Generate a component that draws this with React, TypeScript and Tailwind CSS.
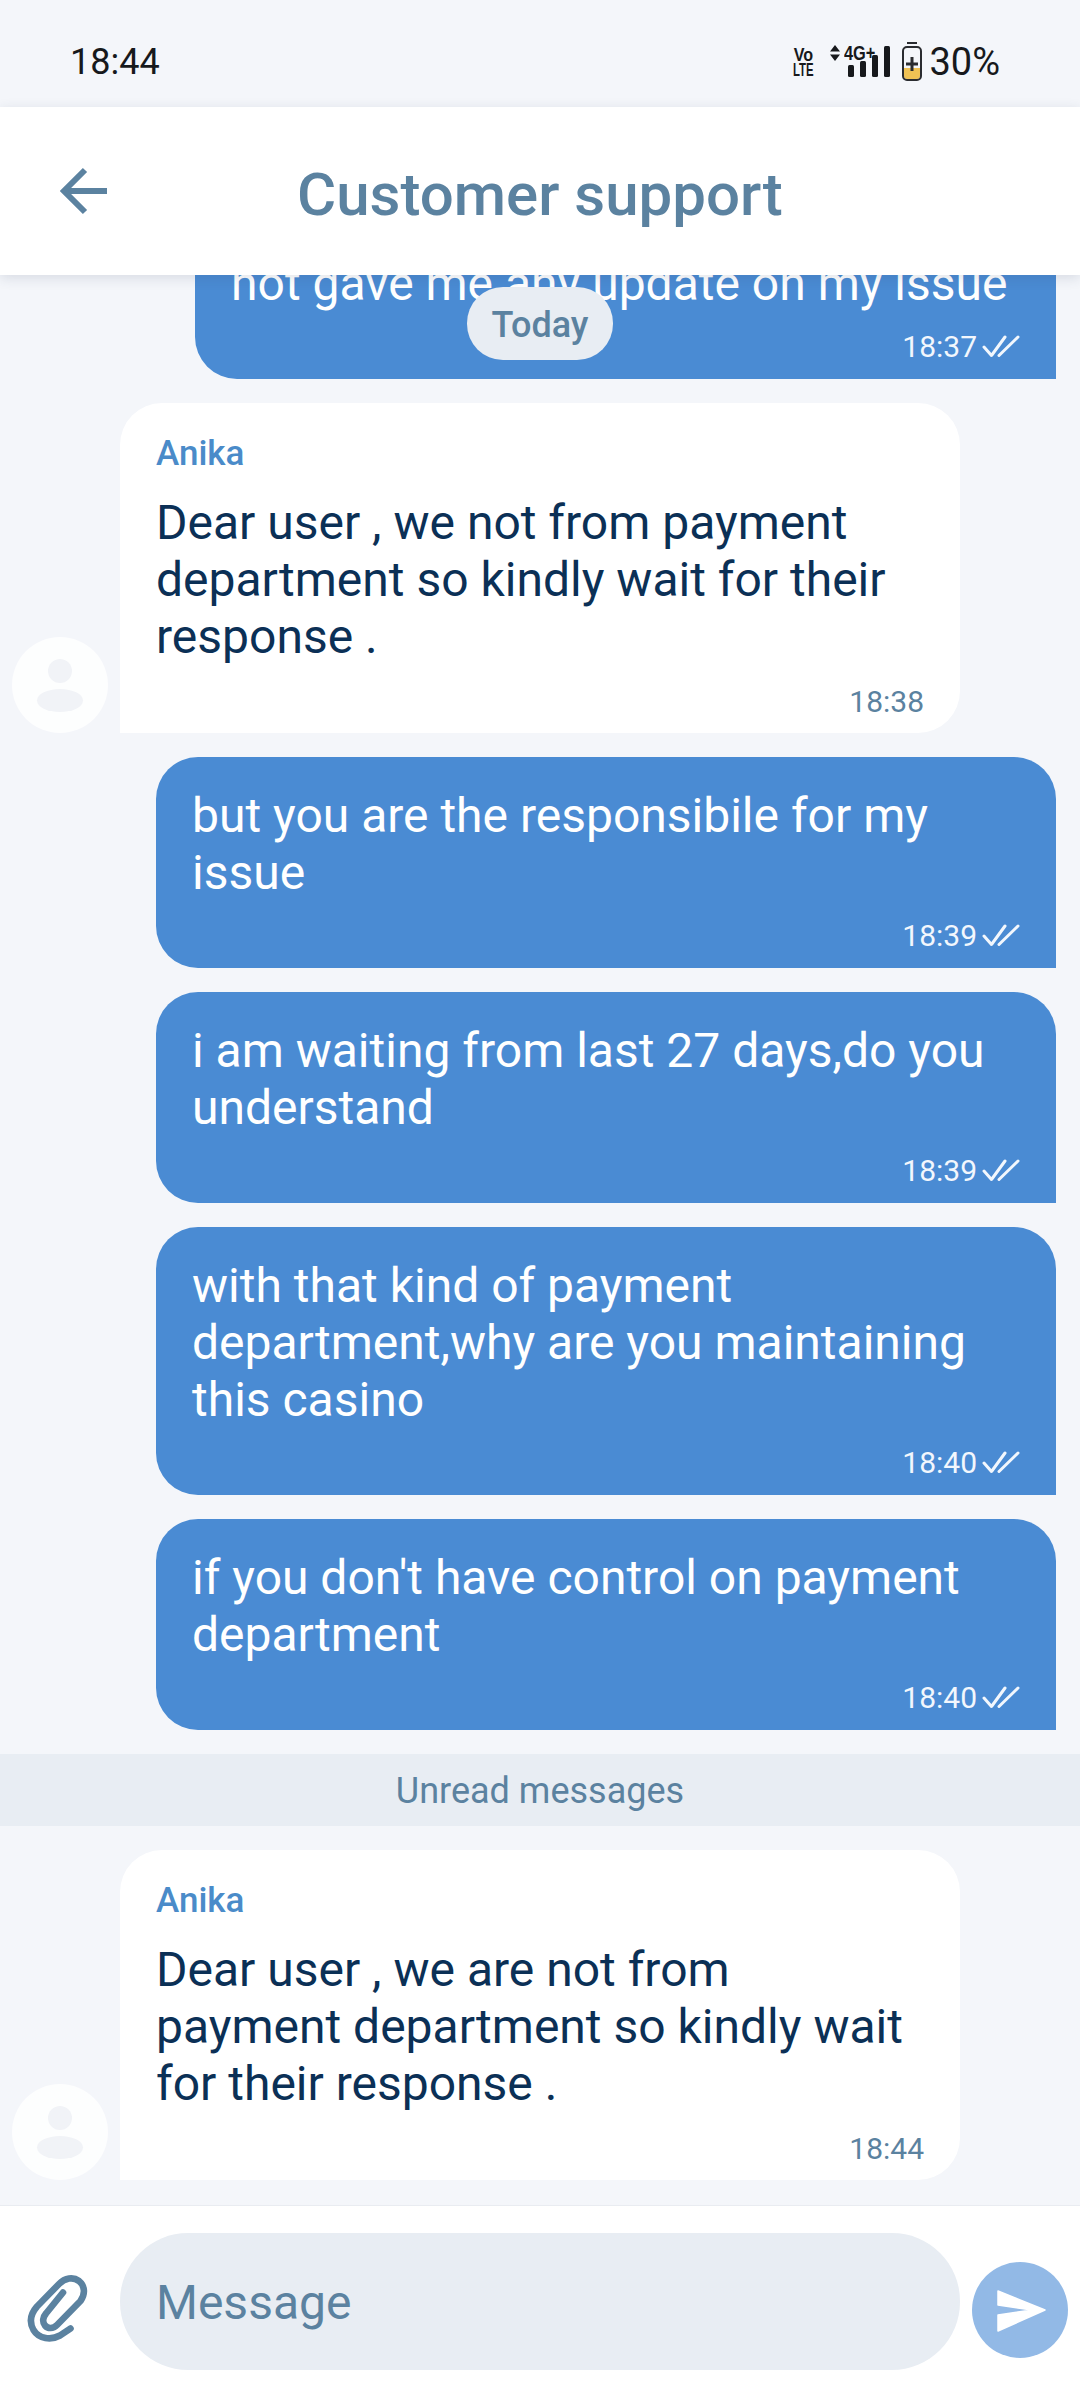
function DoubleCheck() {
  return (
    <svg className="w-[38px] h-[24px] ml-[5px]" viewBox="0 0 38 24" fill="none" stroke="currentColor" strokeWidth={3} strokeLinecap="round" strokeLinejoin="round">
      <path d="M2 13l7.5 8.5L23 3" />
      <path d="M17 21.5L36 3" />
    </svg>
  );
}

function Avatar() {
  return (
    <div className="w-[96px] h-[96px] shrink-0 rounded-full bg-white/85 flex flex-col items-center justify-center gap-[6px]">
      <div className="w-[24px] h-[24px] rounded-full bg-[#f1f3f7]" />
      <div className="w-[46px] h-[23px] rounded-[50%] bg-[#f1f3f7]" />
    </div>
  );
}

function Outgoing({ text, time, className }: { text: string; time: string; className: string }) {
  return (
    <div className={`self-end shrink-0 mr-[24px] bg-[#4a8bd3] text-white rounded-t-[42px] rounded-bl-[42px] pt-[30px] pb-[18px] px-[36px] ${className}`}>
      <p className="text-[48px] leading-[57px]">{text}</p>
      <div className="flex items-center justify-end h-[30px] mt-[19px] text-[30px] text-[#f2f7fd]">
        {time}
        <DoubleCheck />
      </div>
    </div>
  );
}

function Incoming({ text, time }: { text: string; time: string }) {
  return (
    <div className="flex items-end shrink-0 gap-[12px] pl-[12px]">
      <Avatar />
      <div className="w-[840px] bg-white rounded-t-[42px] rounded-br-[42px] pt-[32px] pb-[14px] px-[36px]">
        <div className="text-[35px] leading-[38px] font-medium text-[#4a8bc9]">Anika</div>
        <p className="mt-[21px] text-[48px] leading-[57px] text-[#0b3056]">{text}</p>
        <div className="mt-[18px] h-[36px] flex items-center justify-end text-[30px] text-[#5b82a0]">{time}</div>
      </div>
    </div>
  );
}

export default function App() {
  return (
    <div className="w-[1080px] h-[2400px] flex flex-col bg-[#f4f6fa] font-['Roboto',sans-serif] overflow-hidden">
      {/* Status bar */}
      <div className="h-[107px] shrink-0 flex items-center justify-between pl-[70px] pr-[80px] pt-[17px] text-[#17191c]">
        <span className="text-[36px]">18:44</span>
        <div className="flex items-center">
          <div className="w-[22px] flex flex-col items-center text-[19px] leading-[15px] font-bold font-['Liberation_Sans',sans-serif]">
            <span className="scale-x-[0.85] whitespace-nowrap">Vo</span>
            <span className="scale-x-[0.6] whitespace-nowrap">LTE</span>
          </div>
          <svg className="ml-[15px] w-[12px] h-[16px] mb-[18px]" viewBox="0 0 12 16" fill="currentColor">
            <path d="M6 0l5 6.5H1zM6 16l-5-6.5h10z" />
          </svg>
          <div className="relative ml-[3px] mb-[6px] w-[48px] h-[36px]">
            <span className="absolute top-[2px] left-0 origin-left scale-x-[0.78] whitespace-nowrap text-[21px] leading-[20px] font-bold font-['Liberation_Sans',sans-serif]">4G+</span>
            <svg className="absolute left-0 top-0 w-[48px] h-[36px]" viewBox="0 0 48 36" fill="currentColor">
              <rect x="4" y="24" width="6" height="12" rx="1.5" />
              <rect x="16" y="20" width="6" height="16" rx="1.5" />
              <rect x="28" y="14" width="6" height="22" rx="1.5" />
              <rect x="40" y="5" width="6" height="31" rx="1.5" />
            </svg>
          </div>
          <svg className="ml-[9px] w-[22px] h-[40px]" viewBox="0 0 22 40" fill="none">
            <path d="M6 1h10" stroke="#2a2c30" strokeWidth={2} />
            <path d="M3 26h16v8a3 3 0 0 1-3 3H6a3 3 0 0 1-3-3z" fill="#f0c254" />
            <rect x="2" y="5" width="18" height="33" rx="4" stroke="#2a2c30" strokeWidth={2} />
            <path d="M11 15v14M5 22h12" stroke="#2a2c30" strokeWidth={3} />
          </svg>
          <span className="ml-[6px] text-[38px]">30%</span>
        </div>
      </div>

      {/* Header */}
      <div className="relative z-10 h-[168px] shrink-0 bg-white shadow-[0_3px_12px_rgba(40,60,90,0.14)] flex items-center pl-[60px] text-[#5b82a0]">
        <svg className="w-[48px] h-[48px] shrink-0" viewBox="0 0 48 48" fill="none" stroke="currentColor" strokeWidth={6}>
          <path d="M47 24H5" />
          <path d="M25 3L4 24l21 21" />
        </svg>
        <h1 className="ml-[189px] text-[60px] font-medium mt-[8px]">Customer support</h1>
      </div>

      {/* Messages */}
      <div className="relative flex-1 min-h-0 overflow-hidden flex flex-col justify-end gap-[24px] pb-[25px]">
        <Outgoing className="w-[861px]" text="not gave me any update on my issue" time="18:37" />
        <Incoming text="Dear user , we not from payment department so kindly wait for their response ." time="18:38" />
        <Outgoing className="w-[900px]" text="but you are the responsibile for my issue" time="18:39" />
        <Outgoing className="w-[900px]" text="i am waiting from last 27 days,do you understand" time="18:39" />
        <Outgoing className="w-[900px]" text="with that kind of payment department,why are you maintaining this casino" time="18:40" />
        <Outgoing className="w-[900px]" text="if you don't have control on payment department" time="18:40" />
        <div className="h-[72px] shrink-0 bg-[#e8edf3] flex items-center justify-center pt-[2px] text-[36px] text-[#5b82a0]">Unread messages</div>
        <Incoming text="Dear user , we are not from payment department so kindly wait for their response ." time="18:44" />

        {/* Date pill */}
        <div className="absolute top-[12px] left-[467px] w-[146px] h-[73px] rounded-[36px] bg-[#e8edf3] flex items-center justify-center pt-[2px] text-[36px] font-medium text-[#5b82a0]">Today</div>
      </div>

      {/* Input */}
      <div className="h-[195px] shrink-0 bg-white border-t border-[#e9ecf1] flex items-start">
        <svg className="ml-[10px] mt-[54px] w-[100px] h-[100px] shrink-0 text-[#5b82a0]" viewBox="0 0 100 100" fill="none" stroke="currentColor" strokeWidth={6.6} strokeLinecap="round" strokeLinejoin="round">
          <path d="M60.5 68.5L50 75.5C41 80.5 29 79 23.5 70C19 62 20.5 54 27 46.5L49 24C55 18 63 16.5 69 21C75 26 75.5 34 70.5 41L47 65C43 69 38 69 35 65.5C32 61.5 33 57 36 53.5L53 32.5" />
        </svg>
        <div className="ml-[10px] mt-[27px] w-[840px] shrink-0 h-[137px] rounded-[68px] bg-[#e8edf3] flex items-center pl-[36px] pt-[2px] text-[48px] text-[#5b82a0]">Message</div>
        <div className="ml-[12px] mt-[56px] w-[96px] h-[96px] shrink-0 rounded-full bg-[#92b9e6]">
          <svg className="w-[96px] h-[96px]" viewBox="0 0 96 96" fill="white" stroke="white" strokeWidth={1.5} strokeLinejoin="round">
            <path d="M26 29L73 48L26 69V53L60 48L26 43Z" />
          </svg>
        </div>
      </div>
    </div>
  );
}
